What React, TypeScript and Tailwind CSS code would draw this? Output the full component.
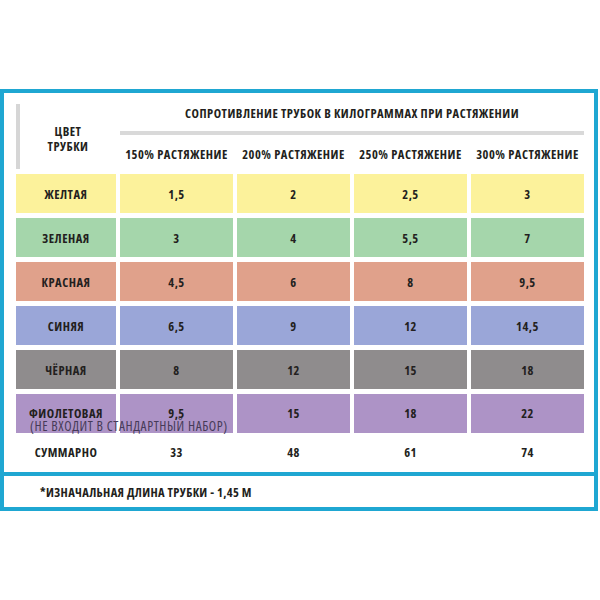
import React from "react";

const rows = [
  { name: "ЖЕЛТАЯ", bg: "bg-[#fcf29b]", v: ["1,5", "2", "2,5", "3"] },
  { name: "ЗЕЛЕНАЯ", bg: "bg-[#a5d6ab]", v: ["3", "4", "5,5", "7"] },
  { name: "КРАСНАЯ", bg: "bg-[#e0a18b]", v: ["4,5", "6", "8", "9,5"] },
  { name: "СИНЯЯ", bg: "bg-[#9aa6d8]", v: ["6,5", "9", "12", "14,5"] },
  { name: "ЧЁРНАЯ", bg: "bg-[#8f8c8d]", v: ["8", "12", "15", "18"] },
  { name: "ФИОЛЕТОВАЯ", bg: "bg-[#ad93c6]", v: ["9,5", "15", "18", "22"] },
];

export default function App() {
  return (
    <div className="w-[600px] h-[600px] bg-white text-[#231f20] font-bold text-[12.5px] tracking-[0.5px] font-['Open_Sans',sans-serif] font-stretch-condensed pt-[89px]">
      <div className="w-[598px] border-4 border-[#1fa7d2]">
        <div className="h-[379px] pt-[11px] pl-[12px] flex flex-col gap-[5px]">
          <div className="flex gap-[4px] h-[65px]">
            <div className="w-[100px] border-l-4 border-[#d6d6d6] flex items-center justify-center text-center leading-[15px] pt-[5px]">
              ЦВЕТ<br />ТРУБКИ
            </div>
            <div className="w-[464px] flex flex-col">
              <div className="mt-[2px] h-[16px] leading-[16px] text-center whitespace-nowrap">
                СОПРОТИВЛЕНИЕ ТРУБОК В КИЛОГРАММАХ ПРИ РАСТЯЖЕНИИ
              </div>
              <div className="mt-[9px] h-[4px] bg-[#d9d9d9]" />
              <div className="mt-[12px] flex gap-[4px] leading-[16px]">
                {["150%", "200%", "250%", "300%"].map((p) => (
                  <div key={p} className="w-[113px] text-center whitespace-nowrap">{p} РАСТЯЖЕНИЕ</div>
                ))}
              </div>
            </div>
          </div>
          {rows.map((r, i) => {
            const pad = i === 5 ? "pt-[1px]" : "pt-[4px]";
            return (
              <div key={r.name} className="flex gap-[4px] h-[39px]">
                <div className={`w-[100px] ${r.bg} ${pad} relative flex items-center justify-center`}>
                  <span>{r.name}</span>
                  {i === 5 && (
                    <span className="absolute left-[14px] top-[24px] z-10 leading-[16px] whitespace-nowrap font-normal text-[13.5px] tracking-[0.6px] text-[#463b58]">
                      (НЕ ВХОДИТ В СТАНДАРТНЫЙ НАБОР)
                    </span>
                  )}
                </div>
                {r.v.map((v, j) => (
                  <div key={j} className={`w-[113px] ${r.bg} ${pad} flex items-center justify-center`}>
                    {v}
                  </div>
                ))}
              </div>
            );
          })}
          <div className="flex gap-[4px] h-[28px] pt-[3px]">
            <div className="w-[100px] flex items-center justify-center">СУММАРНО</div>
            {["33", "48", "61", "74"].map((v) => (
              <div key={v} className="w-[113px] flex items-center justify-center">{v}</div>
            ))}
          </div>
        </div>
        <div className="h-[35px] border-t-4 border-[#1fa7d2] pl-[36px] pt-[4px] flex items-center tracking-[0.35px]">
          *ИЗНАЧАЛЬНАЯ ДЛИНА ТРУБКИ - 1,45 М
        </div>
      </div>
    </div>
  );
}
